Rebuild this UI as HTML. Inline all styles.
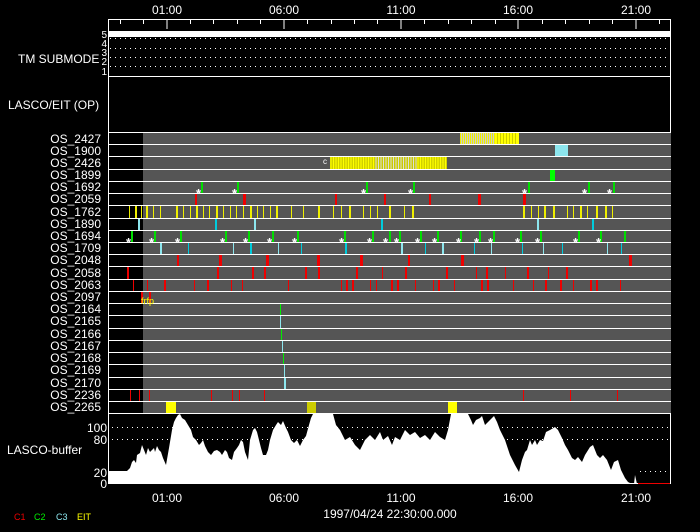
<!DOCTYPE html>
<html><head><meta charset="utf-8"><style>
html,body{margin:0;padding:0;background:#000;width:700px;height:532px;overflow:hidden}
svg{display:block}
text{font-family:"Liberation Sans",sans-serif;fill:#fff}
</style></head><body>
<svg width="700" height="532" viewBox="0 0 700 532" xmlns="http://www.w3.org/2000/svg">
<rect width="700" height="532" fill="#000"/>
<g font-size="12" text-anchor="middle">
<text x="167" y="14">01:00</text><text x="284" y="14">06:00</text><text x="401" y="14">11:00</text><text x="518" y="14">16:00</text><text x="636" y="14">21:00</text>
</g>
<rect x="108.5" y="19.5" width="562" height="464" fill="none" stroke="#fff"/>
<g stroke="#fff">
<path d="M120.5 19v5M143.5 19v5M190.5 19v5M213.5 19v5M237.5 19v5M260.5 19v5M307.5 19v5M331.5 19v5M354.5 19v5M377.5 19v5M424.5 19v5M448.5 19v5M471.5 19v5M495.5 19v5M542.5 19v5M565.5 19v5M589.5 19v5M612.5 19v5M659.5 19v5"/>
<path d="M167 19v10M284 19v10M401 19v10M518 19v10M636 19v10"/>
</g>
<rect x="109" y="31" width="562" height="6" fill="#fff"/>
<g stroke="#fff" stroke-dasharray="1 4">
<line x1="110" y1="38.5" x2="670" y2="38.5"/><line x1="110" y1="48.5" x2="670" y2="48.5"/><line x1="110" y1="57.5" x2="670" y2="57.5"/><line x1="110" y1="66.5" x2="670" y2="66.5"/>
</g>
<line x1="108" y1="76.5" x2="671" y2="76.5" stroke="#fff"/>
<g font-size="10" text-anchor="end">
<text x="107" y="38">5</text><text x="107" y="47">4</text><text x="107" y="56">3</text><text x="107" y="65">2</text><text x="107" y="75">1</text>
</g>
<text x="18" y="63" font-size="12">TM SUBMODE</text>
<text x="8" y="109" font-size="12">LASCO/EIT (OP)</text>
<rect x="109" y="132" width="562" height="281" fill="#555"/>
<rect x="109" y="132" width="34" height="281" fill="#000"/>
<g stroke="#fff">
<path d="M108 132.5h563M108 144.5h563M108 156.5h563M108 169.5h563M108 181.5h563M108 193.5h563M108 205.5h563M108 218.5h563M108 230.5h563M108 242.5h563M108 254.5h563M108 266.5h563M108 279.5h563M108 291.5h563M108 303.5h563M108 315.5h563M108 328.5h563M108 340.5h563M108 352.5h563M108 364.5h563M108 377.5h563M108 389.5h563M108 401.5h563M108 413.5h563"/>
</g>
<g font-size="12" text-anchor="end">
<text x="101" y="143">OS_2427</text><text x="101" y="155">OS_1900</text><text x="101" y="167">OS_2426</text><text x="101" y="179">OS_1899</text><text x="101" y="191">OS_1692</text><text x="101" y="203">OS_2059</text><text x="101" y="216">OS_1762</text><text x="101" y="228">OS_1890</text><text x="101" y="240">OS_1694</text><text x="101" y="252">OS_1709</text><text x="101" y="264">OS_2048</text><text x="101" y="277">OS_2058</text><text x="101" y="289">OS_2063</text><text x="101" y="301">OS_2097</text><text x="101" y="313">OS_2164</text><text x="101" y="325">OS_2165</text><text x="101" y="338">OS_2166</text><text x="101" y="350">OS_2167</text><text x="101" y="362">OS_2168</text><text x="101" y="374">OS_2169</text><text x="101" y="387">OS_2170</text><text x="101" y="399">OS_2236</text><text x="101" y="411">OS_2265</text>
</g>
<rect x="460" y="133" width="35" height="11" fill="#ccc"/>
<g stroke="#ee0" stroke-width="1"><path d="M460.5 133v11M462.5 133v11M464.5 133v11M466.5 133v11M468.5 133v11M470.5 133v11M472.5 133v11M474.5 133v11M476.5 133v11M478.5 133v11M480.5 133v11M482.5 133v11M484.5 133v11M486.5 133v11M488.5 133v11M490.5 133v11M492.5 133v11M494.5 133v11"/></g>
<rect x="495" y="133" width="24" height="11" fill="#ff0"/>
<g stroke="#cc0"><path d="M497.5 133v11M500.5 133v11M503.5 133v11M506.5 133v11M509.5 133v11M512.5 133v11M515.5 133v11"/></g>
<rect x="555" y="145" width="13" height="11" fill="#8de6ee"/>
<rect x="330" y="157" width="117" height="12" fill="#cc0"/>
<g stroke="#ff0" stroke-width="1.2"><path d="M331 157v12M333.5 157v12M336 157v12M338.5 157v12M341 157v12M343.5 157v12M346 157v12M348.5 157v12M351 157v12M353.5 157v12M356 157v12M358.5 157v12M361 157v12M363.5 157v12M366 157v12M368.5 157v12M371 157v12M373.5 157v12M418 157v12M420.5 157v12M423 157v12M425.5 157v12M428 157v12M430.5 157v12M433 157v12M435.5 157v12M438 157v12M440.5 157v12M443 157v12M445.5 157v12"/></g>
<g stroke="#ddd"><path d="M376 157v12M378.5 157v12M381 157v12M383.5 157v12M386 157v12M388.5 157v12M391 157v12M393.5 157v12M396 157v12M398.5 157v12M401 157v12M403.5 157v12M406 157v12M408.5 157v12M411 157v12M413.5 157v12M416 157v12"/></g>
<text x="323" y="164" font-size="8">c</text>
<rect x="550" y="170" width="5" height="11" fill="#0f0"/>
<g fill="#0d0"><rect x="201" y="182" width="2" height="11"/><rect x="237" y="182" width="2" height="11"/><rect x="366" y="182" width="2" height="11"/><rect x="413" y="182" width="2" height="11"/><rect x="528" y="182" width="2" height="11"/><rect x="588" y="182" width="2" height="11"/><rect x="613" y="182" width="2" height="11"/></g>
<g font-size="13" font-weight="bold" transform="translate(0,4)"><text x="196" y="194">*</text><text x="232" y="194">*</text><text x="361" y="194">*</text><text x="408" y="194">*</text><text x="522" y="194">*</text><text x="582" y="194">*</text><text x="607" y="194">*</text></g>
<g fill="#e00"><rect x="195" y="194" width="2" height="11"/><rect x="243" y="194" width="3" height="11"/><rect x="335" y="194" width="2" height="11"/><rect x="384" y="194" width="2" height="11"/><rect x="429" y="194" width="2" height="11"/><rect x="478" y="194" width="3" height="11"/><rect x="523" y="194" width="3" height="11"/></g>
<g fill="#ee0"><rect x="129" y="206" width="1" height="12"/><rect x="135" y="206" width="2" height="12"/><rect x="141" y="206" width="1" height="12"/><rect x="146" y="206" width="2" height="12"/><rect x="153" y="206" width="1" height="12"/><rect x="160" y="206" width="1" height="12"/><rect x="176" y="206" width="2" height="12"/><rect x="183" y="206" width="1" height="12"/><rect x="190" y="206" width="1" height="12"/><rect x="196" y="206" width="2" height="12"/><rect x="203" y="206" width="1" height="12"/><rect x="209" y="206" width="1" height="12"/><rect x="216" y="206" width="2" height="12"/><rect x="223" y="206" width="1" height="12"/><rect x="230" y="206" width="1" height="12"/><rect x="236" y="206" width="1" height="12"/><rect x="243" y="206" width="1" height="12"/><rect x="250" y="206" width="2" height="12"/><rect x="257" y="206" width="1" height="12"/><rect x="263" y="206" width="1" height="12"/><rect x="270" y="206" width="1" height="12"/><rect x="276" y="206" width="2" height="12"/><rect x="291" y="206" width="1" height="12"/><rect x="303" y="206" width="1" height="12"/><rect x="318" y="206" width="2" height="12"/><rect x="333" y="206" width="1" height="12"/><rect x="341" y="206" width="1" height="12"/><rect x="349" y="206" width="2" height="12"/><rect x="363" y="206" width="1" height="12"/><rect x="370" y="206" width="1" height="12"/><rect x="377" y="206" width="1" height="12"/><rect x="389" y="206" width="2" height="12"/><rect x="404" y="206" width="1" height="12"/><rect x="412" y="206" width="2" height="12"/><rect x="523" y="206" width="2" height="12"/><rect x="531" y="206" width="1" height="12"/><rect x="538" y="206" width="1" height="12"/><rect x="544" y="206" width="2" height="12"/><rect x="553" y="206" width="2" height="12"/><rect x="567" y="206" width="1" height="12"/><rect x="573" y="206" width="1" height="12"/><rect x="580" y="206" width="2" height="12"/><rect x="587" y="206" width="1" height="12"/><rect x="596" y="206" width="2" height="12"/><rect x="605" y="206" width="2" height="12"/><rect x="612" y="206" width="1" height="12"/></g>
<g fill="#0cd"><rect x="138" y="219" width="2" height="11" fill="#8de6ee"/><rect x="215" y="219" width="2" height="11"/><rect x="254" y="219" width="2" height="11" fill="#8de6ee"/><rect x="381" y="219" width="2" height="11"/><rect x="537" y="219" width="2" height="11" fill="#8de6ee"/><rect x="592" y="219" width="2" height="11"/></g>
<g fill="#0d0"><rect x="131" y="231" width="2" height="11"/><rect x="154" y="231" width="2" height="11"/><rect x="180" y="231" width="2" height="11"/><rect x="225" y="231" width="2" height="11"/><rect x="248" y="231" width="2" height="11"/><rect x="272" y="231" width="2" height="11"/><rect x="297" y="231" width="2" height="11"/><rect x="344" y="231" width="2" height="11"/><rect x="372" y="231" width="2" height="11"/><rect x="389" y="231" width="2" height="11"/><rect x="399" y="231" width="2" height="11"/><rect x="420" y="231" width="2" height="11"/><rect x="437" y="231" width="2" height="11"/><rect x="460" y="231" width="2" height="11"/><rect x="479" y="231" width="2" height="11"/><rect x="493" y="231" width="2" height="11"/><rect x="520" y="231" width="2" height="11"/><rect x="540" y="231" width="2" height="11"/><rect x="578" y="231" width="2" height="11"/><rect x="600" y="231" width="2" height="11"/><rect x="624" y="231" width="2" height="11"/></g>
<g font-size="13" font-weight="bold" transform="translate(0,4)"><text x="126" y="243">*</text><text x="149" y="243">*</text><text x="175" y="243">*</text><text x="220" y="243">*</text><text x="243" y="243">*</text><text x="267" y="243">*</text><text x="292" y="243">*</text><text x="339" y="243">*</text><text x="367" y="243">*</text><text x="383" y="243">*</text><text x="394" y="243">*</text><text x="415" y="243">*</text><text x="432" y="243">*</text><text x="456" y="243">*</text><text x="474" y="243">*</text><text x="488" y="243">*</text><text x="515" y="243">*</text><text x="535" y="243">*</text><text x="573" y="243">*</text><text x="596" y="243">*</text></g>
<g fill="#0cd"><rect x="160" y="243" width="2" height="11" fill="#8de6ee"/><rect x="188" y="243" width="1" height="11"/><rect x="233" y="243" width="1" height="11" fill="#8de6ee"/><rect x="250" y="243" width="2" height="11"/><rect x="278" y="243" width="1" height="11" fill="#8de6ee"/><rect x="301" y="243" width="1" height="11"/><rect x="345" y="243" width="2" height="11"/><rect x="401" y="243" width="2" height="11" fill="#8de6ee"/><rect x="425" y="243" width="1" height="11"/><rect x="442" y="243" width="2" height="11" fill="#8de6ee"/><rect x="474" y="243" width="1" height="11"/><rect x="491" y="243" width="1" height="11" fill="#8de6ee"/><rect x="522" y="243" width="1" height="11"/><rect x="543" y="243" width="1" height="11" fill="#8de6ee"/><rect x="562" y="243" width="1" height="11"/><rect x="607" y="243" width="1" height="11" fill="#8de6ee"/><rect x="621" y="243" width="1" height="11"/></g>
<g fill="#e00"><rect x="177" y="255" width="2" height="11"/><rect x="219" y="255" width="3" height="11"/><rect x="266" y="255" width="3" height="11"/><rect x="317" y="255" width="3" height="11"/><rect x="360" y="255" width="3" height="11"/><rect x="408" y="255" width="2" height="11"/><rect x="461" y="255" width="3" height="11"/><rect x="629" y="255" width="3" height="11"/></g>
<g fill="#e00"><rect x="127" y="267" width="2" height="12"/><rect x="217" y="267" width="2" height="12"/><rect x="252" y="267" width="2" height="12"/><rect x="264" y="267" width="2" height="12"/><rect x="305" y="267" width="2" height="12"/><rect x="318" y="267" width="2" height="12"/><rect x="356" y="267" width="2" height="12"/><rect x="382" y="267" width="1" height="12"/><rect x="405" y="267" width="2" height="12"/><rect x="446" y="267" width="2" height="12"/><rect x="476" y="267" width="1" height="12"/><rect x="486" y="267" width="2" height="12"/><rect x="505" y="267" width="1" height="12"/><rect x="527" y="267" width="2" height="12"/><rect x="548" y="267" width="1" height="12"/><rect x="566" y="267" width="2" height="12"/></g>
<g fill="#e00"><rect x="133" y="280" width="1" height="11"/><rect x="147" y="280" width="1" height="11"/><rect x="164" y="280" width="2" height="11"/><rect x="194" y="280" width="1" height="11"/><rect x="207" y="280" width="2" height="11"/><rect x="231" y="280" width="1" height="11"/><rect x="242" y="280" width="1" height="11"/><rect x="288" y="280" width="1" height="11"/><rect x="341" y="280" width="1" height="11"/><rect x="346" y="280" width="2" height="11"/><rect x="352" y="280" width="2" height="11"/><rect x="370" y="280" width="1" height="11"/><rect x="376" y="280" width="1" height="11"/><rect x="391" y="280" width="2" height="11"/><rect x="397" y="280" width="2" height="11"/><rect x="415" y="280" width="1" height="11"/><rect x="433" y="280" width="1" height="11"/><rect x="438" y="280" width="2" height="11"/><rect x="454" y="280" width="1" height="11"/><rect x="481" y="280" width="2" height="11"/><rect x="487" y="280" width="2" height="11"/><rect x="513" y="280" width="1" height="11"/><rect x="533" y="280" width="1" height="11"/><rect x="545" y="280" width="2" height="11"/><rect x="560" y="280" width="2" height="11"/><rect x="573" y="280" width="1" height="11"/><rect x="590" y="280" width="2" height="11"/><rect x="596" y="280" width="2" height="11"/><rect x="620" y="280" width="1" height="11"/></g>
<g fill="#e00"><rect x="141" y="292" width="2" height="11"/><rect x="149" y="292" width="2" height="11"/></g>
<text x="141" y="304" font-size="9" style="fill:#ff0">frfp</text>
<rect x="280" y="304" width="1" height="11" fill="#0e0"/>
<rect x="280" y="316" width="1" height="12" fill="#8de6ee"/>
<rect x="281" y="329" width="1" height="11" fill="#0e0"/>
<rect x="282" y="341" width="1" height="11" fill="#8de6ee"/>
<rect x="283" y="353" width="1" height="11" fill="#0e0"/>
<rect x="284" y="365" width="1" height="12" fill="#8de6ee"/>
<rect x="284" y="378" width="2" height="11" fill="#8de6ee"/>
<g fill="#e00"><rect x="130" y="390" width="1" height="11"/><rect x="139" y="390" width="1" height="11"/><rect x="149" y="390" width="1" height="11"/><rect x="211" y="390" width="1" height="11"/><rect x="232" y="390" width="1" height="11"/><rect x="239" y="390" width="1" height="11"/><rect x="264" y="390" width="1" height="11"/><rect x="523" y="390" width="1" height="11"/><rect x="570" y="390" width="1" height="11"/><rect x="617" y="390" width="1" height="11"/></g>
<rect x="166" y="402" width="10" height="11" fill="#ff0"/>
<rect x="307" y="402" width="9" height="11" fill="#cc0"/>
<rect x="448" y="402" width="9" height="11" fill="#ff0"/>
<polygon fill="#fff" points="109,484 109,471 127,471 130,468 132,462 134,460 136,463 137,455 140,453 142,445 144,450 146,455 148,448 150,452 152,450 154,448 155,452 157,446 159,450 161,452 163,458 166,465 169,448 172,430 174,422 176,418 178,415 180,414 182,418 185,420 188,425 191,430 193,437 196,440 199,445 201,443 203,440 205,446 208,452 211,455 214,451 217,450 220,452 222,455 225,450 227,452 229,458 232,460 234,452 237,448 239,445 241,440 243,442 245,452 248,460 250,440 253,430 255,428 257,432 259,440 261,448 263,455 266,455 268,450 270,440 273,430 276,425 278,422 281,425 283,421 286,428 288,432 291,440 294,443 297,440 300,446 303,440 306,436 309,425 311,418 313,414 333,414 336,425 340,430 345,440 350,437 355,445 360,450 365,440 370,435 375,440 380,432 383,440 388,436 392,445 395,437 400,440 405,430 410,435 415,432 420,438 425,435 430,440 435,432 440,437 445,440 448,430 451,414 468,414 471,420 473,425 476,420 480,418 482,416 485,425 490,420 494,416 497,422 500,430 505,440 510,455 515,465 519,472 522,460 525,452 527,450 530,440 532,445 535,440 537,445 540,440 543,441 546,432 550,430 555,427 558,430 562,438 565,445 568,450 572,458 575,460 578,457 582,462 585,455 590,447 593,445 597,455 600,458 603,455 607,460 611,470 614,462 618,460 621,470 625,478 628,482 632,484 634,484 635,475 637,484"/>
<g stroke="#fff" stroke-dasharray="1 4"><line x1="112" y1="427.5" x2="670" y2="427.5"/><line x1="112" y1="439.5" x2="670" y2="439.5"/><line x1="640" y1="471.5" x2="670" y2="471.5"/></g>
<line x1="638" y1="483.5" x2="671" y2="483.5" stroke="#e00"/>
<rect x="108" y="413" width="1" height="71" fill="#fff"/><rect x="670" y="413" width="1" height="71" fill="#fff"/>
<g font-size="12" text-anchor="end"><text x="107" y="432">100</text><text x="107" y="444">80</text><text x="107" y="477">20</text><text x="107" y="488">0</text></g>
<text x="7" y="454" font-size="12">LASCO-buffer</text>
<g font-size="12" text-anchor="middle">
<text x="167" y="502">01:00</text><text x="284" y="502">06:00</text><text x="401" y="502">11:00</text><text x="518" y="502">16:00</text><text x="636" y="502">21:00</text>
</g>
<text x="390" y="518" font-size="12" text-anchor="middle">1997/04/24 22:30:00.000</text>
<g font-size="9"><text x="14" y="520" style="fill:#e00">C1</text><text x="34" y="520" style="fill:#0e0">C2</text><text x="56" y="520" style="fill:#8de6ee">C3</text><text x="77" y="520" style="fill:#ff0">EIT</text></g>
</svg>
</body></html>
